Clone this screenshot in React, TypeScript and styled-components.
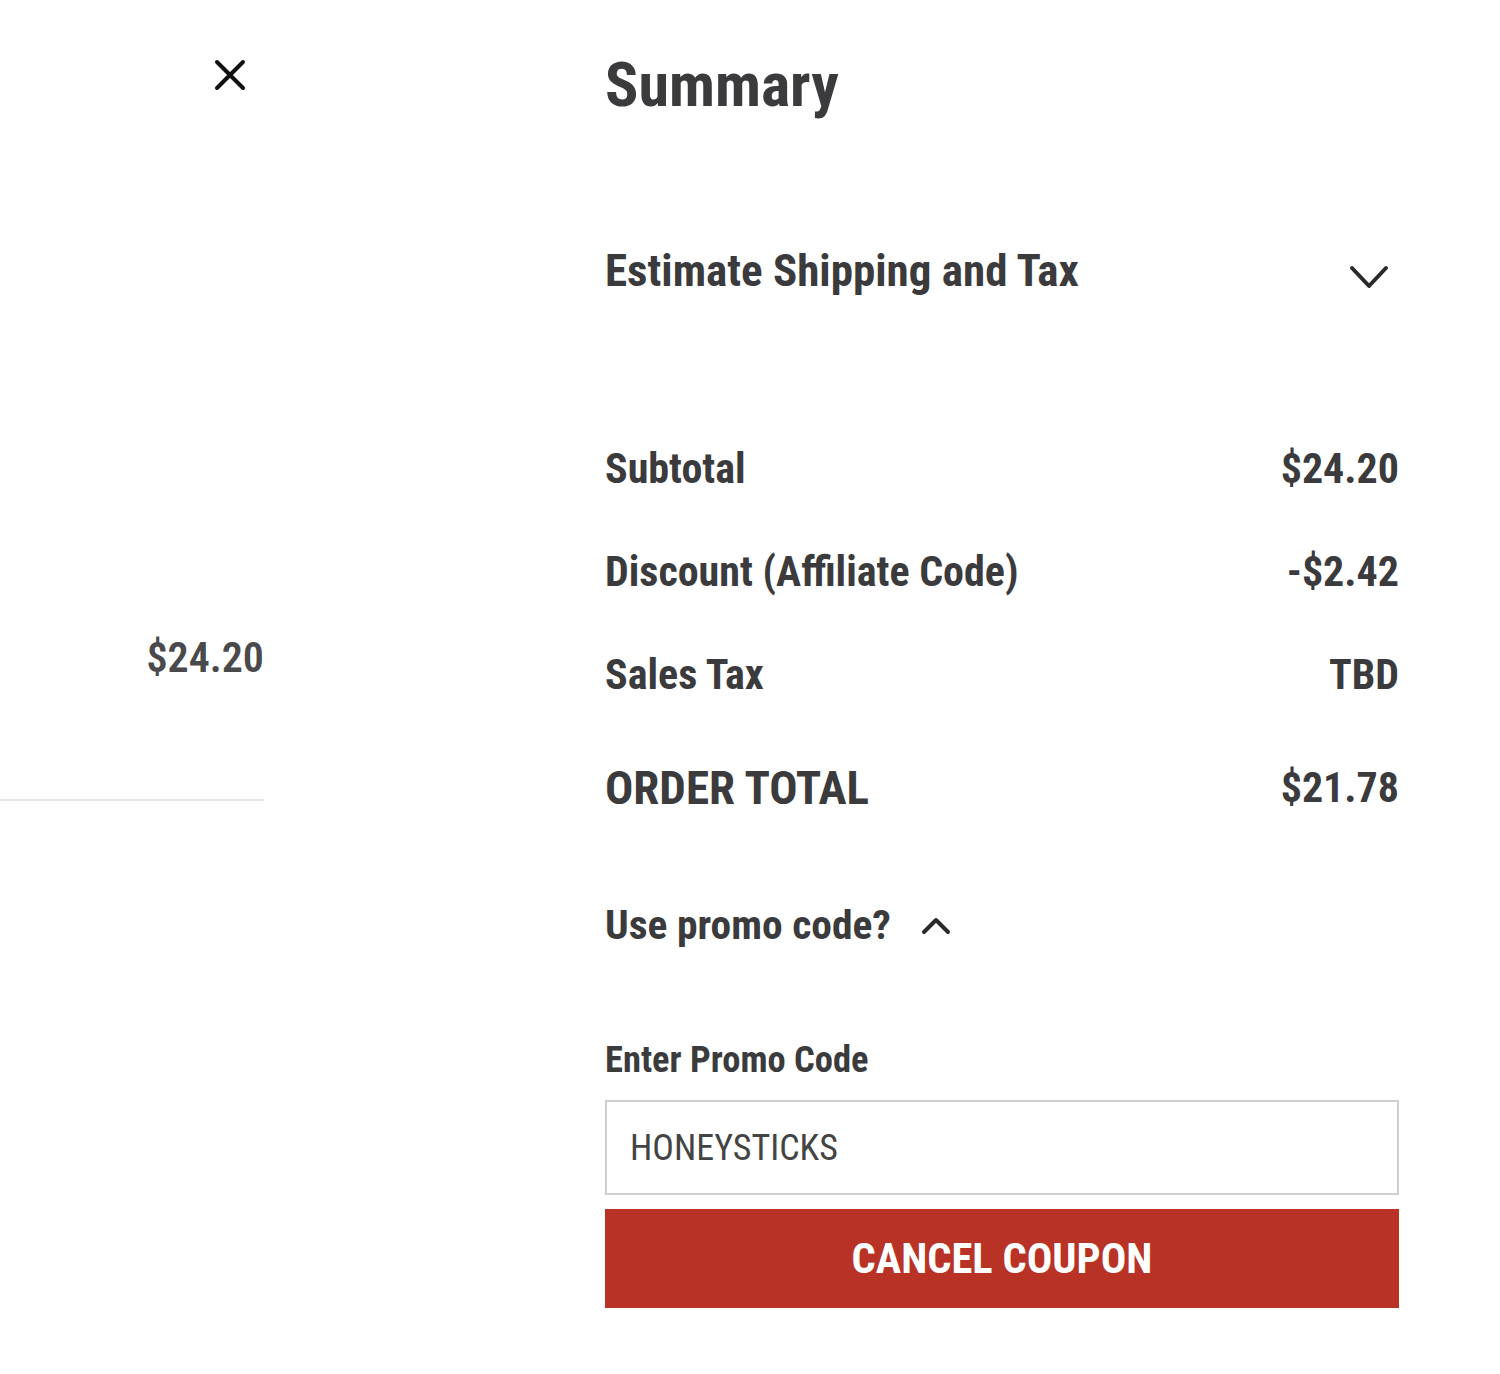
import React from "react";
import styled, { createGlobalStyle } from "styled-components";

const Global = createGlobalStyle`
  body {
    margin: 0;
    background: #fff;
    font-family: "Roboto Condensed", Roboto, "Liberation Sans", sans-serif;
    color: #3b3b3d;
  }
`;

const Page = styled.div`
  display: flex;
  align-items: flex-start;
  gap: 341px;
  width: 1500px;
  min-height: 1374px;
  box-sizing: border-box;
`;

const Cart = styled.aside`
  width: 264px;
  flex: 0 0 auto;
  display: flex;
  flex-direction: column;
  align-items: flex-end;
`;

const CloseButton = styled.button`
  margin-top: 58px;
  margin-right: 17px;
  width: 34px;
  height: 34px;
  padding: 0;
  border: 0;
  background: none;
  display: flex;
  align-items: center;
  justify-content: center;
  cursor: pointer;
`;

const CartPrice = styled.div`
  margin-top: 542px;
  font-size: 42px;
  font-weight: 600;
  line-height: 48px;
  color: #4a4a4c;
`;

const Divider = styled.hr`
  align-self: stretch;
  margin: 117px 0 0;
  border: 0;
  border-top: 2px solid #e6e6e6;
`;

const Summary = styled.section`
  width: 794px;
  flex: 0 0 auto;
  display: flex;
  flex-direction: column;
`;

const Title = styled.h1`
  margin: 49px 0 0;
  font-size: 62px;
  line-height: 72px;
  font-weight: 700;
`;

const Toggle = styled.div<{ $mt: number; $size: number }>`
  margin-top: ${(p) => p.$mt}px;
  height: 60px;
  display: flex;
  align-items: center;
  gap: 30px;
  font-size: ${(p) => p.$size}px;
  font-weight: 700;
  cursor: pointer;
`;

const Spacer = styled.div`
  flex: 1;
`;

const IconSlot = styled.span<{ $dy: number; $mr?: number }>`
  display: flex;
  margin-top: ${(p) => p.$dy}px;
  margin-right: ${(p) => p.$mr || 0}px;
`;

const Lines = styled.div`
  margin-top: 117px;
  display: flex;
  flex-direction: column;
`;

const Line = styled.div<{ $total?: boolean }>`
  display: flex;
  justify-content: space-between;
  align-items: center;
  height: 103px;
  margin-top: ${(p) => (p.$total ? "10px" : "0")};
  font-size: 42px;
  font-weight: 700;
`;

const LineLabel = styled.span<{ $total?: boolean }>`
  font-size: ${(p) => (p.$total ? "47px" : "inherit")};
`;

const FieldLabel = styled.label`
  margin-top: 85px;
  height: 40px;
  display: flex;
  align-items: center;
  font-size: 36.5px;
  font-weight: 700;
`;

const Input = styled.input`
  margin-top: 21px;
  height: 95px;
  box-sizing: border-box;
  border: 2px solid #cfcfcf;
  padding: 0 23px;
  font-family: inherit;
  font-size: 36px;
  color: #444;
  outline: none;
`;

const CancelButton = styled.button`
  margin-top: 14px;
  height: 99px;
  border: 0;
  background: #b93226;
  color: #fff;
  font-family: inherit;
  font-size: 42.5px;
  font-weight: 700;
  text-transform: uppercase;
  cursor: pointer;
`;

const Chevron = ({ up, w, h }: { up?: boolean; w: number; h: number }) => (
  <svg width={w} height={h} viewBox={`0 0 ${w} ${h}`} fill="none">
    <path
      d={
        up
          ? `M3 ${h - 3} L${w / 2} 3 L${w - 3} ${h - 3}`
          : `M3 3 L${w / 2} ${h - 3} L${w - 3} 3`
      }
      stroke="#2a2a2c"
      strokeWidth="4"
      strokeLinecap="round"
      strokeLinejoin="round"
    />
  </svg>
);

const lines = [
  { label: "Subtotal", value: "$24.20" },
  { label: "Discount (Affiliate Code)", value: "-$2.42" },
  { label: "Sales Tax", value: "TBD" },
];

export default function App() {
  return (
    <>
      <Global />
      <Page>
        <Cart>
          <CloseButton aria-label="Close">
            <svg width="34" height="34" viewBox="0 0 34 34">
              <path
                d="M4 4 L30 30 M30 4 L4 30"
                stroke="#111"
                strokeWidth="4"
                strokeLinecap="round"
              />
            </svg>
          </CloseButton>
          <CartPrice>$24.20</CartPrice>
          <Divider />
        </Cart>

        <Summary>
          <Title>Summary</Title>

          <Toggle $mt={119} $size={45}>
            Estimate Shipping and Tax
            <Spacer />
            <IconSlot $dy={14} $mr={10}>
              <Chevron w={40} h={24} />
            </IconSlot>
          </Toggle>

          <Lines>
            {lines.map((l) => (
              <Line key={l.label}>
                <LineLabel>{l.label}</LineLabel>
                <span>{l.value}</span>
              </Line>
            ))}
            <Line $total>
              <LineLabel $total>ORDER TOTAL</LineLabel>
              <span>$21.78</span>
            </Line>
          </Lines>

          <Toggle $mt={55} $size={41.5}>
            Use promo code?
            <IconSlot $dy={4}>
              <Chevron up w={30} h={18} />
            </IconSlot>
          </Toggle>

          <FieldLabel htmlFor="promo">Enter Promo Code</FieldLabel>
          <Input id="promo" defaultValue="HONEYSTICKS" />
          <CancelButton>Cancel Coupon</CancelButton>
        </Summary>
      </Page>
    </>
  );
}
